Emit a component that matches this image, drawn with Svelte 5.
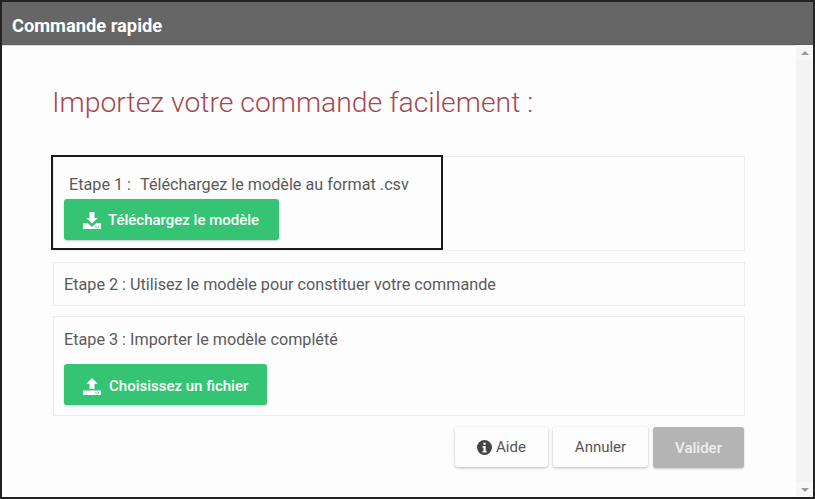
<script>
    const steps = {
        first: 'Téléchargez le modèle au format .csv',
        second: 'Etape 2 : Utilisez le modèle pour constituer votre commande',
        third: 'Etape 3 : Importer le modèle complété'
    }
</script>

<div class="dialog">
    <header>Commande rapide</header>
    <div class="scroll">
        <main>
            <h1>Importez votre commande facilement :</h1>

            <section class="step one">
                <p class="label"><span class="num">Etape 1 :</span>{steps.first}</p>
                <button class="green dl">
                    <svg width="18" height="17" viewBox="0 0 18 17">
                        <path d="M6.500 0h5v6h3.200L9 11.600 3.300 6h3.200z" fill="#fff" />
                        <path d="M0 11h4.500L9 15l4.500-4H18v6H0z" fill="#fff" />
                        <circle cx="13" cy="15" r=".7" fill="#35c473" />
                        <circle cx="15.500" cy="15" r=".7" fill="#35c473" />
                    </svg>
                    Téléchargez le modèle
                </button>
                <div class="highlight"></div>
            </section>

            <section class="step two">{steps.second}</section>

            <section class="step three">
                <p class="label">{steps.third}</p>
                <button class="green ul">
                    <svg width="18" height="17" viewBox="0 0 18 17">
                        <path d="M9 0l5.700 5.800h-3.200V11h-5V5.800H3.300z" fill="#fff" />
                        <path d="M0 12.500h18V17H0z" fill="#fff" />
                        <circle cx="13" cy="14.800" r=".7" fill="#35c473" />
                        <circle cx="15.500" cy="14.800" r=".7" fill="#35c473" />
                    </svg>
                    Choisissez un fichier
                </button>
            </section>

            <div class="actions">
                <button class="plain aide">
                    <svg width="15" height="15" viewBox="0 0 16 16">
                        <circle cx="8" cy="8" r="8" fill="#444" />
                        <path d="M6.800 2.800h2.400v2.300H6.800zM6 6.500h3.200v5h1v1.700H6v-1.700h1V8.200H6z" fill="#fff" />
                    </svg>
                    Aide
                </button>
                <button class="plain annuler">Annuler</button>
                <button class="valider" disabled>Valider</button>
            </div>
        </main>
        <aside class="scrollbar">
            <span class="cap"><span class="arrow up"></span></span>
            <span class="cap"><span class="arrow down"></span></span>
        </aside>
    </div>
</div>

<style>
    :global(body) {
        margin: 0;
        background: #fdfdfd;
    }

    .dialog {
        box-sizing: border-box;
        width: 815px;
        height: 499px;
        border: 2px solid #222;
        display: flex;
        flex-direction: column;
        font-family: Roboto, sans-serif;
        background: #fdfdfd;
    }

    header {
        height: 43px;
        flex: none;
        box-sizing: border-box;
        background: #666;
        border-bottom: 1px solid #5d5d5d;
        box-shadow: 0 1px 0 #ddd;
        color: #fff;
        font-size: 18.300px;
        font-weight: 700;
        line-height: 47px;
        padding-left: 10px;
    }

    .scroll {
        flex: 1;
        display: flex;
        min-height: 0;
    }

    main {
        flex: 1;
        padding: 0 51px;
    }

    h1 {
        margin: 41px 0 37px -1px;
        font-size: 28.350px;
        line-height: 33px;
        font-weight: 300;
        color: #a5474f;
    }

    .step {
        box-sizing: border-box;
        border: 1px solid #eee;
        color: #5a5a5a;
        font-size: 16.200px;
    }

    .label {
        margin: 0;
    }

    .num {
        display: inline-block;
        margin-right: 9px;
    }

    .one {
        position: relative;
        height: 95px;
        padding: 18px 10px 0;
    }

    .one .label {
        padding-left: 5px;
        line-height: 20px;
        margin-bottom: 4px;
    }

    .highlight {
        position: absolute;
        left: -3px;
        top: -2px;
        width: 392px;
        height: 95px;
        box-sizing: border-box;
        border: 2px solid #1a1a1a;
    }

    .two {
        height: 44px;
        margin-top: 11px;
        padding-left: 10px;
        line-height: 44px;
    }

    .three {
        height: 100px;
        margin-top: 10px;
        padding: 13px 10px 0;
    }

    .three .label {
        line-height: 20px;
        margin-bottom: 14px;
    }

    button {
        font-family: inherit;
        font-size: 15px;
        font-weight: 400;
        border: none;
        border-radius: 3px;
        padding: 0;
    }

    .green {
        display: flex;
        align-items: center;
        gap: 7px;
        height: 41px;
        background: #35c473;
        color: #fff;
        font-weight: 500;
        box-shadow: 0 1px 2px rgba(0, 0, 0, .2);
        padding: 1px 0 0 19px;
    }

    .dl {
        width: 215px;
    }

    .ul {
        width: 203px;
        gap: 8px;
        padding-top: 3px;
    }

    .actions {
        display: flex;
        justify-content: flex-end;
        gap: 5px;
        margin-top: 11px;
        padding-right: 1px;
    }

    .plain {
        height: 40px;
        background: #fdfdfd;
        color: #555;
        box-shadow: 0 1px 3px rgba(0, 0, 0, .25);
    }

    .aide {
        width: 93px;
        display: flex;
        align-items: center;
        justify-content: center;
        gap: 4px;
    }

    .annuler {
        width: 95px;
    }

    .valider {
        width: 91px;
        height: 41px;
        background: #b4b4b4;
        color: #eee;
        font-weight: 500;
        box-shadow: 0 1px 2px rgba(0, 0, 0, .2);
    }

    .scrollbar {
        width: 17px;
        flex: none;
        background: #f3f3f3;
        display: flex;
        flex-direction: column;
        justify-content: space-between;
    }

    .cap {
        height: 15px;
        background: #f7f7f7;
        display: flex;
        align-items: center;
        justify-content: center;
    }

    .arrow {
        width: 0;
        height: 0;
        border-left: 4px solid transparent;
        border-right: 4px solid transparent;
    }

    .up {
        border-bottom: 4px solid #999;
    }

    .down {
        border-top: 4px solid #999;
    }
</style>
